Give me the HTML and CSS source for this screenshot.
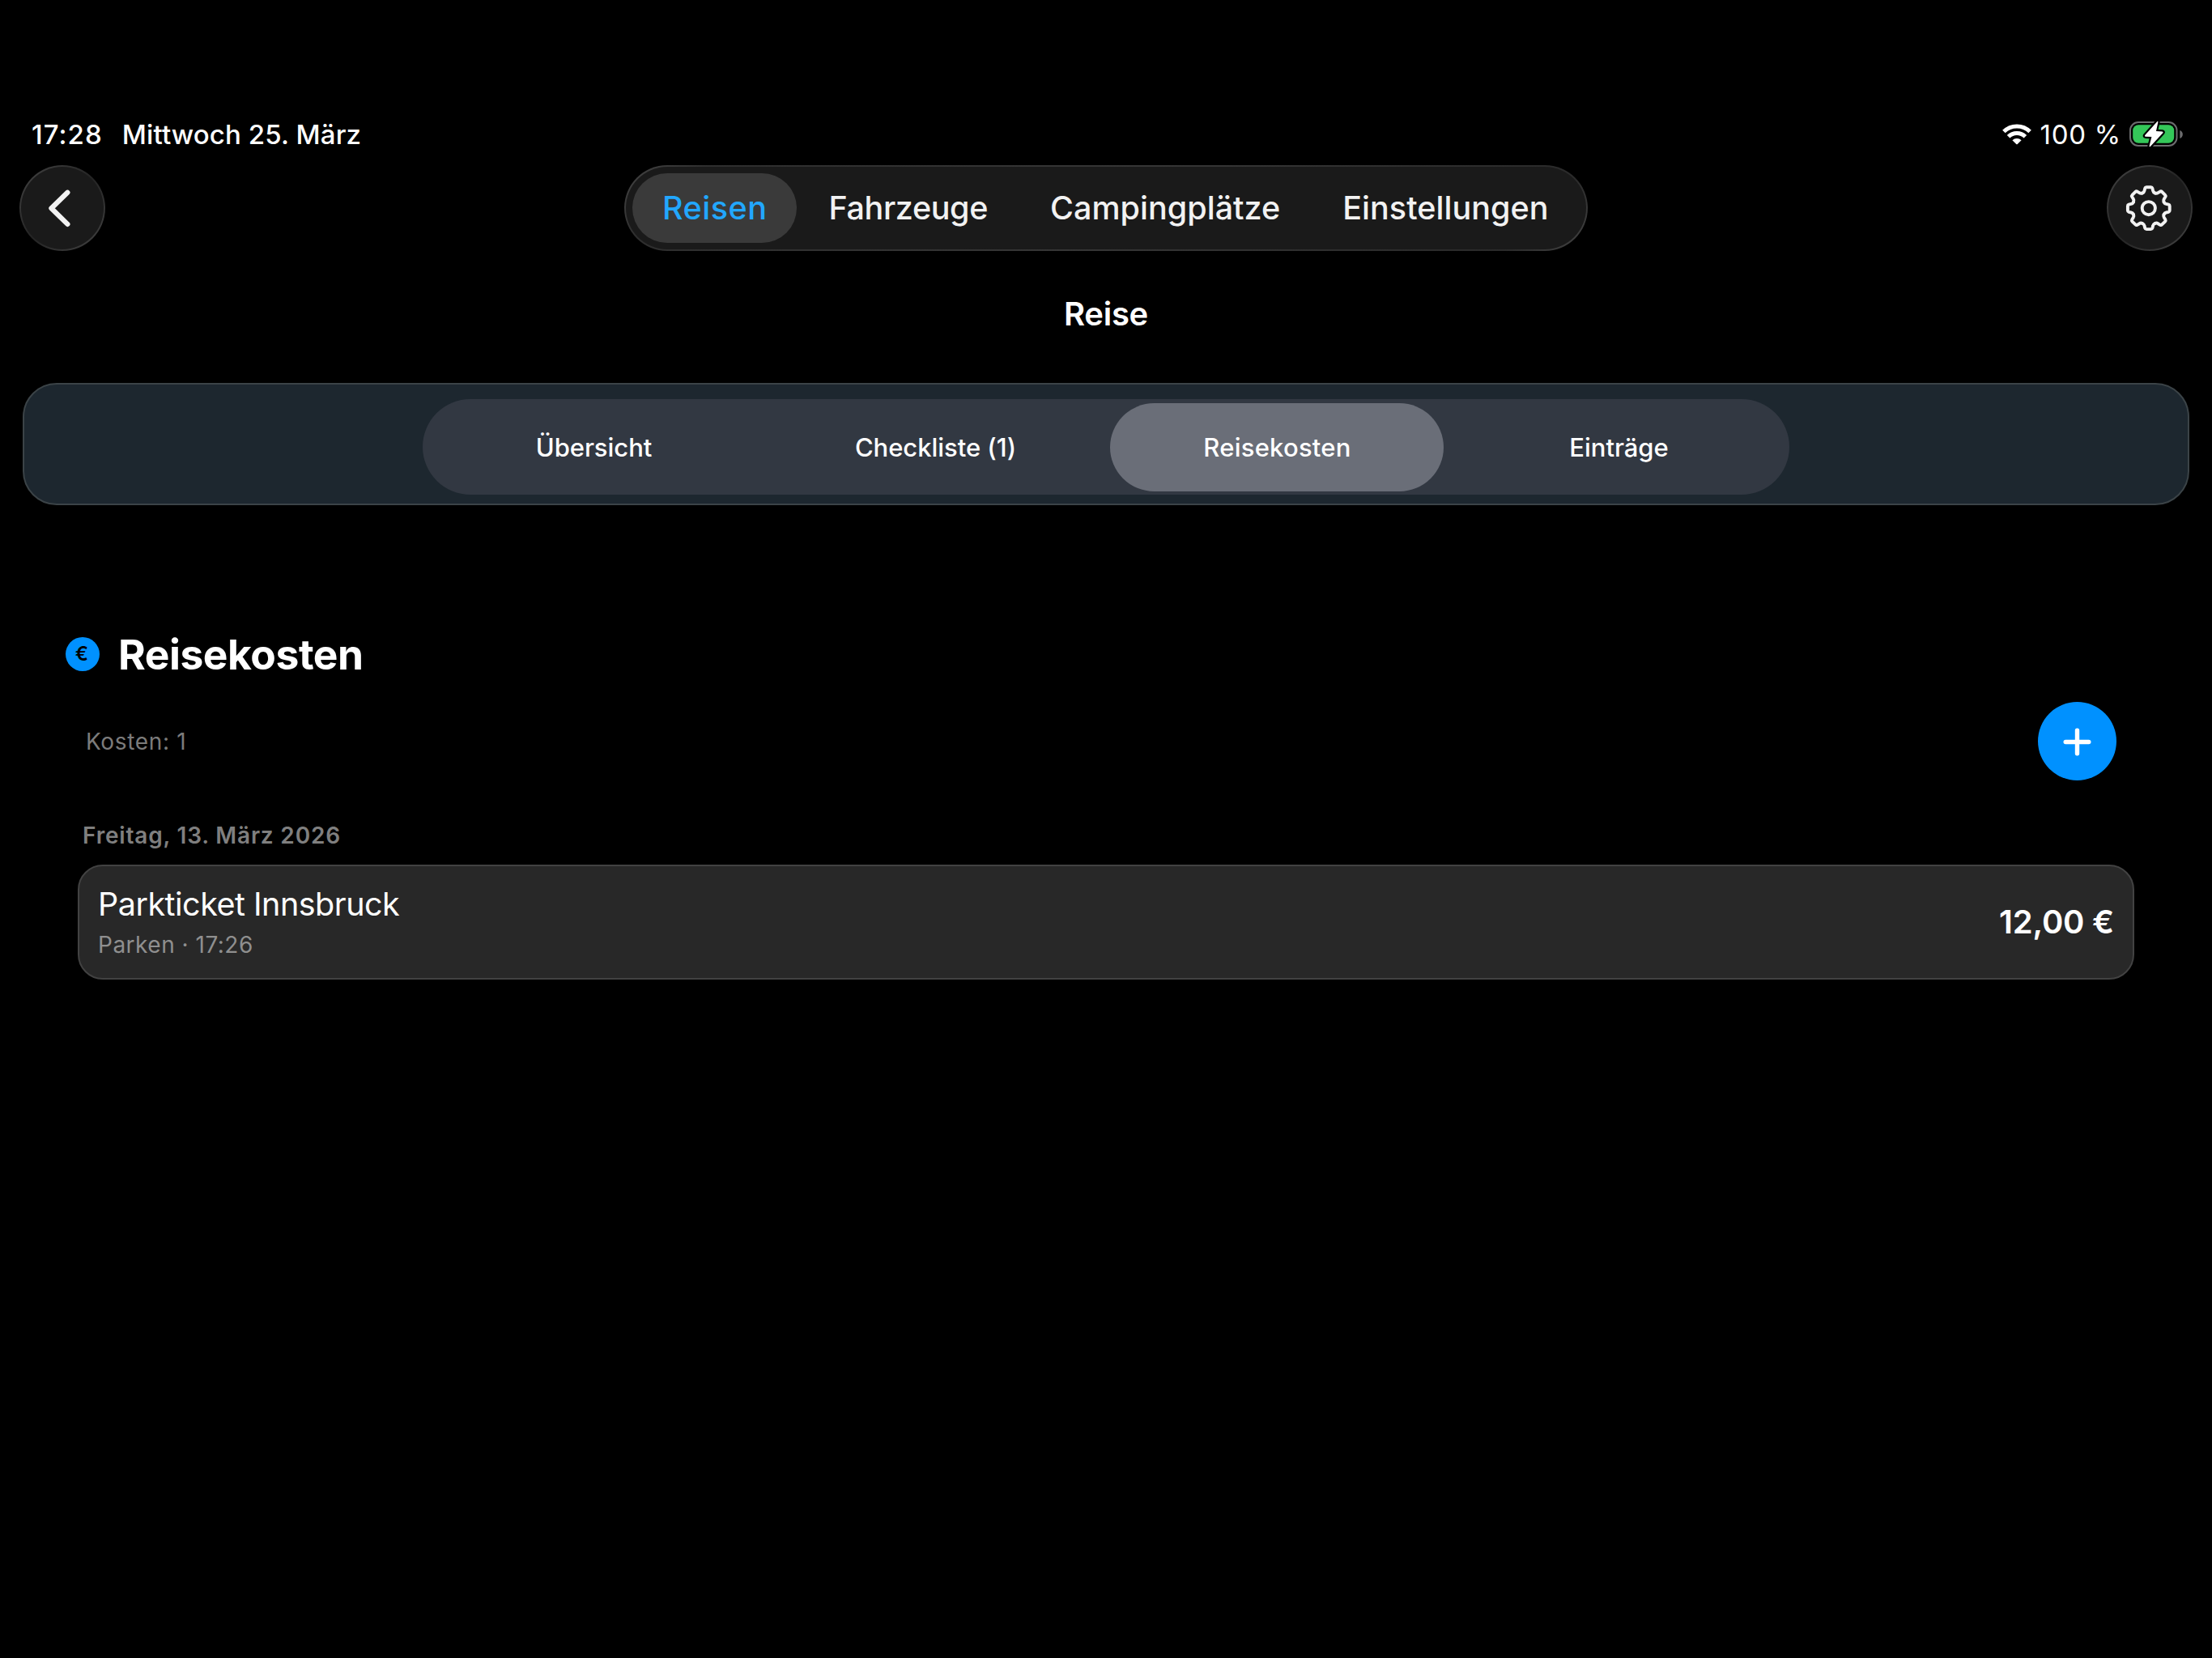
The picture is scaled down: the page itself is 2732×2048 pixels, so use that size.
FILE: index.html
```html
<!DOCTYPE html>
<html lang="de">
<head>
<meta charset="utf-8">
<title>Reise – Reisekosten</title>
<link rel="stylesheet" href="styles.css">
</head>
<body>
<div class="status">
  <span class="status-time">17:28</span>
  <span class="status-date">Mittwoch 25. März</span>
  <div class="status-right">
    <svg class="wifi" width="36" height="26" viewBox="0 0 36 26">
      <g fill="none" stroke="#fff" stroke-width="5">
        <path d="M1.9 9.6A22.8 22.8 0 0 1 34.1 9.6"/>
        <path d="M7.6 15.8A14.6 14.6 0 0 1 28.4 15.8"/>
      </g>
      <path fill="#fff" d="M12.4 20.2A8 8 0 0 1 23.6 20.2L19 24.8Q18 25.8 17 24.8Z"/>
    </svg>
    <span class="status-level">100 %</span>
    <svg width="67" height="34" viewBox="0 0 67 34">
      <rect x="1" y="2" width="57.5" height="29" rx="10" fill="none" stroke="#6c6c6e" stroke-width="2"/>
      <path fill="#6c6c6e" d="M62.3 12C67 13.2 67 20.8 62.3 22Z"/>
      <rect x="4.2" y="5.2" width="51" height="22.6" rx="7" fill="#34c759"/>
      <path d="M34.2 1.2L19.2 17.9Q18.2 19.4 20 19.7L27.4 20L24.6 31.3Q24.4 33 25.8 32L41.3 15.3Q42.4 13.8 40.6 13.4L33 13L35.4 1.8Q35.4 .2 34.2 1.2Z" fill="#fff" stroke="#000" stroke-width="4.4" stroke-linejoin="round" paint-order="stroke"/>
    </svg>
  </div>
</div>

<header class="topbar">
  <button class="round" aria-label="Zurück">
    <svg width="106" height="106" viewBox="0 0 106 106" fill="none" stroke="#f2f2f2" stroke-width="6.2" stroke-linecap="round" stroke-linejoin="round"><path d="M59.4 33.8L39.4 53.3L59.4 72.9"/></svg>
  </button>
  <nav class="tabs">
    <a class="tab tab-active">Reisen</a>
    <a class="tab tab-vehicles">Fahrzeuge</a>
    <a class="tab">Campingplätze</a>
    <a class="tab">Einstellungen</a>
  </nav>
  <button class="round" aria-label="Einstellungen">
    <svg width="106" height="106" viewBox="-53 -53 106 106" fill="none" stroke="#f2f2f2" stroke-width="3.9" stroke-linecap="round" stroke-linejoin="round">
      <defs><path id="tooth" d="M-7.77 -18.75Q-5.7 -19.6 -5.3 -21.6L-4.6 -24.6Q-4.2 -25.9 -2.8 -25.9H2.8Q4.2 -25.9 4.6 -24.6L5.3 -21.6Q5.7 -19.6 7.77 -18.75"/></defs>
      <g transform="translate(-1.2 .2)">
        <use href="#tooth"/><use href="#tooth" transform="rotate(45)"/><use href="#tooth" transform="rotate(90)"/><use href="#tooth" transform="rotate(135)"/>
        <use href="#tooth" transform="rotate(180)"/><use href="#tooth" transform="rotate(225)"/><use href="#tooth" transform="rotate(270)"/><use href="#tooth" transform="rotate(315)"/>
        <circle r="8.1"/>
      </g>
    </svg>
  </button>
</header>

<h1 class="title">Reise</h1>

<section class="panel">
  <div class="segments">
    <span class="segment">Übersicht</span>
    <span class="segment">Checkliste (1)</span>
    <span class="segment segment-active">Reisekosten</span>
    <span class="segment">Einträge</span>
  </div>
</section>

<main class="content">
  <div class="heading"><span class="euro">€</span><h2>Reisekosten</h2></div>
  <div class="summary">
    <span class="count">Kosten: 1</span>
    <button class="add" aria-label="Hinzufügen">
      <svg width="97" height="97" viewBox="0 0 97 97" stroke="#fff" stroke-width="5.4" stroke-linecap="round"><path d="M34.2 49.5H62.8M48.5 35.2V63.8"/></svg>
    </button>
  </div>
  <h3 class="day">Freitag, 13. März 2026</h3>
  <article class="card">
    <div class="card-text">
      <span class="card-name">Parkticket Innsbruck</span>
      <span class="card-meta">Parken · 17:26</span>
    </div>
    <span class="price">12,00 €</span>
  </article>
</main>
</body>
</html>
```
FILE: styles.css
```css
* {
  box-sizing: border-box;
}

body {
  margin: 0;
  min-height: 2048px;
  padding-top: 146px;
  background: #000;
  color: #fff;
  font-family: Inter, "Liberation Sans", sans-serif;
  white-space: nowrap;
}

svg {
  display: block;
}

button {
  padding: 0;
  border: 0;
  color: inherit;
}

.status {
  display: flex;
  align-items: center;
  height: 40px;
  padding: 0 35px 0 39px;
  font-size: 33px;
  line-height: 40px;
  font-weight: 500;
}

.status-time {
  letter-spacing: 1.05px;
}

.status-date {
  margin-left: 24px;
  letter-spacing: 0.11px;
}

.status-right {
  display: flex;
  align-items: center;
  margin-left: auto;
}

.status-level {
  margin: 0 10px 0 11px;
  font-weight: 400;
  letter-spacing: 0.75px;
}

.topbar {
  display: flex;
  justify-content: space-between;
  margin-top: 18px;
  padding: 0 24px;
}

.round {
  width: 106px;
  height: 106px;
  border: 2px solid transparent;
  border-radius: 50%;
  background:
    linear-gradient(#1a1a1a, #1a1a1a) padding-box,
    linear-gradient(135deg, #444, #242424 50%, #444) border-box;
}

.round svg {
  margin: -2px;
}

.tabs {
  display: flex;
  align-items: center;
  width: 1190px;
  height: 106px;
  padding-left: 7.5px;
  border: 2px solid transparent;
  border-radius: 53px;
  background:
    linear-gradient(#1a1a1a, #1a1a1a) padding-box,
    linear-gradient(135deg, #444, #2e2e2e 8%, #363636 50%, #2a2a2a 92%, #444) border-box;
}

.tab {
  height: 86px;
  padding: 0 37.5px 0 39.5px;
  border-radius: 43px;
  color: #f2f2f2;
  font-size: 39.5px;
  line-height: 87px;
  font-weight: 500;
  letter-spacing: 0.02px;
}

.tab-vehicles {
  letter-spacing: -0.38px;
}

.tab-active {
  width: 203.5px;
  padding: 0 0 0 37.5px;
  background: #3a3a3a;
  color: #22a7ff;
  letter-spacing: 0.5px;
}

.title {
  margin: 53px 0 0;
  font-size: 40px;
  line-height: 49px;
  font-weight: 600;
  letter-spacing: -0.29px;
  text-align: center;
}

.panel {
  height: 151px;
  margin: 61px 28px 0;
  padding-top: 18px;
  border: 2px solid #3b4347;
  border-radius: 42px;
  background: #1d272f;
}

.segments {
  display: grid;
  grid-template-columns: repeat(4, 1fr);
  width: 1688px;
  height: 118px;
  margin: 0 auto;
  padding: 4.5px 0;
  border-radius: 59px;
  background: #323842;
}

.segment {
  margin: 0 5px;
  border-radius: 55px;
  font-size: 31px;
  line-height: 109px;
  font-weight: 500;
  letter-spacing: -0.04px;
  text-indent: 1px;
  text-align: center;
}

.segment-active {
  background: #6a6e78;
  letter-spacing: 0.24px;
}

.content {
  padding: 152.5px 96px 0;
}

.heading {
  display: flex;
  align-items: center;
  gap: 23px;
  height: 62px;
  margin-left: -15px;
}

.heading h2 {
  margin: 0;
  font-size: 51.5px;
  line-height: 62px;
  font-weight: 700;
  letter-spacing: -0.45px;
}

.euro {
  width: 42px;
  height: 42px;
  border-radius: 50%;
  background: #0091ff;
  color: #000;
  font-size: 24px;
  line-height: 42px;
  font-weight: 600;
  text-indent: -2px;
  text-align: center;
}

.summary {
  display: flex;
  align-items: center;
  justify-content: space-between;
  margin-top: 28px;
  padding: 0 22px 0 10px;
}

.count {
  padding-top: 2px;
  color: #7b7b7b;
  font-size: 28px;
  letter-spacing: 0.65px;
}

.add {
  width: 97px;
  height: 97px;
  border-radius: 50%;
  background: #0091ff;
}

.day {
  margin: 51px 0 0 6px;
  color: #7f7f7f;
  font-size: 28px;
  line-height: 34px;
  font-weight: 600;
  letter-spacing: 0.82px;
}

.card {
  display: flex;
  align-items: center;
  justify-content: space-between;
  height: 142px;
  margin-top: 19px;
  padding: 0 23px 0 23px;
  border: 2px solid #424242;
  border-radius: 31px;
  background: #282828;
}

.card-text {
  display: flex;
  flex-direction: column;
  gap: 9px;
}

.card-name {
  font-size: 39.5px;
  line-height: 48px;
  letter-spacing: -0.5px;
}

.card-meta {
  color: #8f8f8f;
  font-size: 28px;
  line-height: 34px;
  letter-spacing: 0.5px;
}

.price {
  font-size: 40px;
  font-weight: 600;
  letter-spacing: -0.22px;
}
```
